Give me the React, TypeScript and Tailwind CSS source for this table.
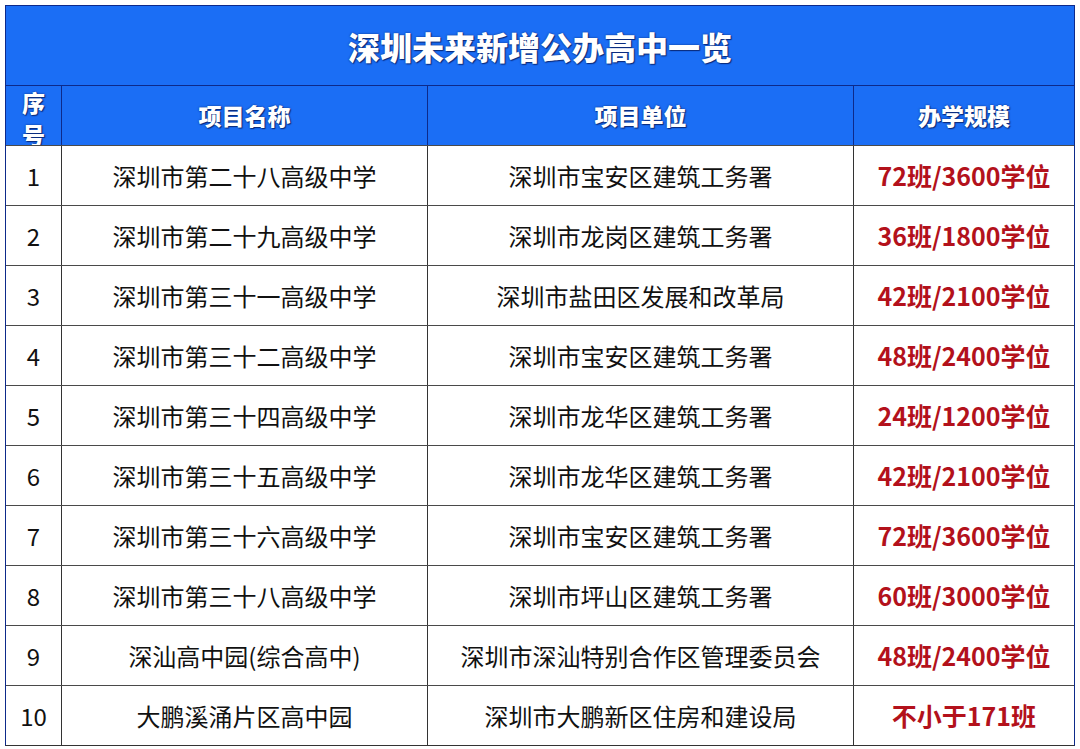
import React from 'react';

type Row = { no: number; name: string; unit: string; scale: string };

const rows: Row[] = [
  { no: 1, name: '深圳市第二十八高级中学', unit: '深圳市宝安区建筑工务署', scale: '72班/3600学位' },
  { no: 2, name: '深圳市第二十九高级中学', unit: '深圳市龙岗区建筑工务署', scale: '36班/1800学位' },
  { no: 3, name: '深圳市第三十一高级中学', unit: '深圳市盐田区发展和改革局', scale: '42班/2100学位' },
  { no: 4, name: '深圳市第三十二高级中学', unit: '深圳市宝安区建筑工务署', scale: '48班/2400学位' },
  { no: 5, name: '深圳市第三十四高级中学', unit: '深圳市龙华区建筑工务署', scale: '24班/1200学位' },
  { no: 6, name: '深圳市第三十五高级中学', unit: '深圳市龙华区建筑工务署', scale: '42班/2100学位' },
  { no: 7, name: '深圳市第三十六高级中学', unit: '深圳市宝安区建筑工务署', scale: '72班/3600学位' },
  { no: 8, name: '深圳市第三十八高级中学', unit: '深圳市坪山区建筑工务署', scale: '60班/3000学位' },
  { no: 9, name: '深汕高中园(综合高中)', unit: '深圳市深汕特别合作区管理委员会', scale: '48班/2400学位' },
  { no: 10, name: '大鹏溪涌片区高中园', unit: '深圳市大鹏新区住房和建设局', scale: '不小于171班' },
];

const font = "font-['Microsoft_YaHei','Noto_Sans_CJK_SC',sans-serif]";
const cols = 'grid grid-cols-[55px_366px_426px_221px]';
const headShadow = '[text-shadow:0_0_2px_#0b2a7a,1px_1px_1px_#0b2a7a]';

export default function App() {
  return (
    <div className={`w-[1080px] h-[749px] bg-white pt-[5px] pl-[5px] ${font}`}>
      <div className="w-[1070px] border border-[#333] border-t-[#0d2a8a] border-x-[#0d2a8a]">
        <div
          className={`h-[79px] bg-[#1b6ef5] flex items-center justify-center text-white font-black text-[32px] ${headShadow}`}>
          深圳未来新增公办高中一览
        </div>
        <div className={`${cols} h-[60px] bg-[#1b6ef5] border-t border-[#0d2a8a] text-white font-black text-[23px] ${headShadow}`}>
          <div className="overflow-hidden flex justify-center">
            <div className="w-[26px] leading-[32px] text-center">序号</div>
          </div>
          <div className="border-l border-[#0d2a8a] flex items-center justify-center">项目名称</div>
          <div className="border-l border-[#0d2a8a] flex items-center justify-center">项目单位</div>
          <div className="border-l border-[#0d2a8a] flex items-center justify-center">办学规模</div>
        </div>
        {rows.map((r) => (
          <div key={r.no} className={`${cols} h-[60px] border-t border-[#4a4a4a] text-[#111] text-[24px]`}>
            <div className="flex items-center justify-center">{r.no}</div>
            <div className="border-l border-[#333] flex items-center justify-center">{r.name}</div>
            <div className="border-l border-[#333] flex items-center justify-center">{r.unit}</div>
            <div className="border-l border-[#333] flex items-center justify-center text-[#b3111b] font-bold text-[25px]">
              {r.scale}
            </div>
          </div>
        ))}
      </div>
    </div>
  );
}
